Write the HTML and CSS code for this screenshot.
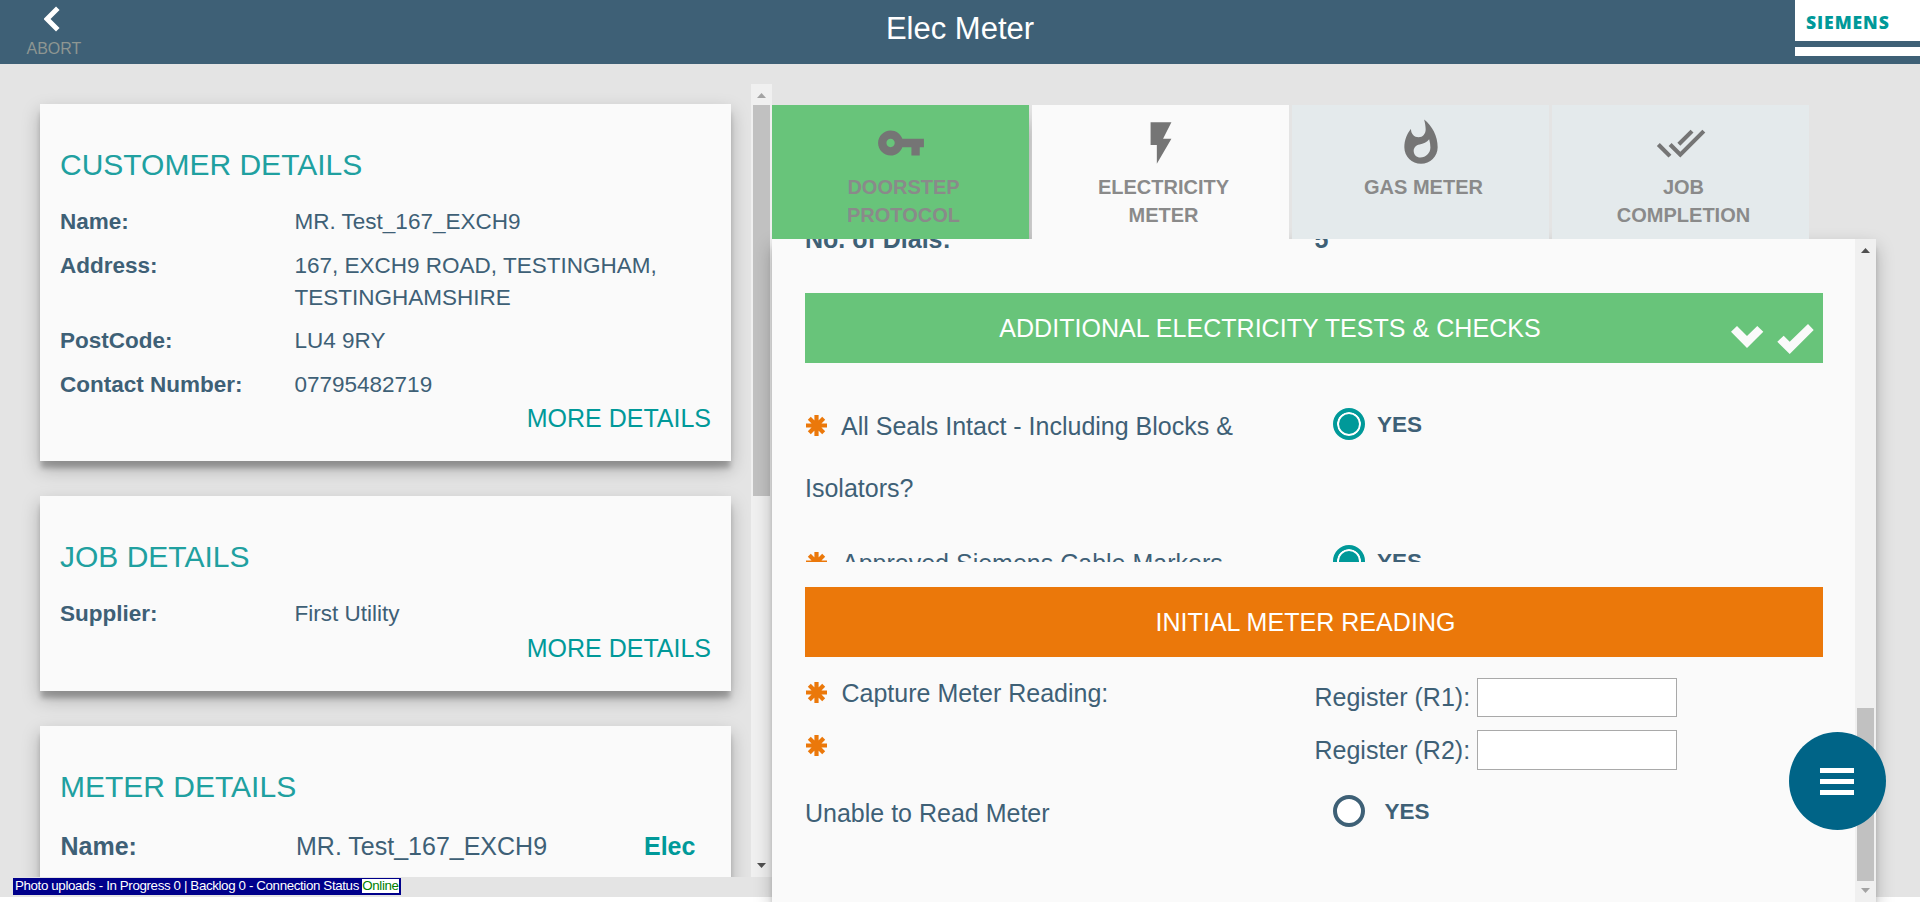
FILE: index.html
```html
<!DOCTYPE html>
<html lang="en">
<head>
<meta charset="utf-8">
<title>Elec Meter</title>
<link rel="stylesheet" href="styles.css">
</head>
<body>
<svg class="defs" width="0" height="0">
  <symbol id="star" viewBox="0 0 21 21">
    <path d="M10.5 0v21M0 10.5h21M3.300 3.300l14.400 14.400M17.700 3.300L3.300 17.700" fill="none" stroke="#eb780a" stroke-width="4.200"/>
  </symbol>
</svg>
<header class="topbar">
  <a class="abort">
    <svg class="abort-icon" viewBox="0 0 16 26"><path d="M13.800 2.200L3 13l10.800 10.800" fill="none" stroke="#fff" stroke-width="5"/></svg>
    <span>ABORT</span>
  </a>
  <h1 class="page-title">Elec Meter</h1>
  <div class="brand"><div class="brand-name"><span>SIEMENS</span></div><div class="brand-foot"></div></div>
</header>

<main class="workspace">
  <section class="sidebar">
    <div class="cards">
      <article class="card">
        <h2>CUSTOMER DETAILS</h2>
        <dl>
          <dt>Name:</dt><dd>MR. Test_167_EXCH9</dd>
          <dt>Address:</dt><dd>167, EXCH9 ROAD, TESTINGHAM, TESTINGHAMSHIRE</dd>
          <dt>PostCode:</dt><dd>LU4 9RY</dd>
          <dt>Contact Number:</dt><dd>07795482719</dd>
        </dl>
        <a class="more">MORE DETAILS</a>
      </article>
      <article class="card">
        <h2>JOB DETAILS</h2>
        <dl><dt>Supplier:</dt><dd>First Utility</dd></dl>
        <a class="more">MORE DETAILS</a>
      </article>
      <article class="card meter">
        <h2>METER DETAILS</h2>
        <div class="meter-row"><b>Name:</b><span>MR. Test_167_EXCH9</span><b class="fuel">Elec</b></div>
      </article>
    </div>
    <div class="scrollbar">
      <svg class="arrow faded" viewBox="0 0 9 5"><path d="M0 5L4.500 0 9 5z"/></svg>
      <div class="thumb side-thumb"></div>
      <svg class="arrow last" viewBox="0 0 9 5"><path d="M0 0h9L4.500 5z"/></svg>
    </div>
  </section>

  <section class="content">
    <nav class="tabs">
      <a class="tab done">
        <svg viewBox="0 0 24 24"><path d="M12.650 10C11.830 7.670 9.610 6 7 6c-3.310 0-6 2.690-6 6s2.690 6 6 6c2.610 0 4.830-1.670 5.650-4H17v4h4v-4h2v-4H12.650zM7 14c-1.100 0-2-.9-2-2s.9-2 2-2 2 .9 2 2-.9 2-2 2z"/></svg>
        <span>DOORSTEP<br>PROTOCOL</span>
      </a>
      <a class="tab active">
        <svg viewBox="0 0 24 24"><path d="M7 2v11h3v9l7-12h-4l4-8z"/></svg>
        <span>ELECTRICITY<br>METER</span>
      </a>
      <a class="tab">
        <svg viewBox="0 0 24 24"><path d="M13.500.67s.74 2.650.74 4.800c0 2.060-1.350 3.730-3.410 3.730-2.070 0-3.630-1.670-3.630-3.730l.03-.36C5.210 7.510 4 10.620 4 14c0 4.420 3.580 8 8 8s8-3.580 8-8C20 8.610 17.410 3.800 13.500.67zM11.710 19c-1.780 0-3.220-1.400-3.220-3.140 0-1.620 1.050-2.760 2.810-3.120 1.770-.36 3.600-1.210 4.620-2.580.39 1.290.59 2.650.59 4.040 0 2.650-2.150 4.800-4.800 4.800z"/></svg>
        <span>GAS METER</span>
      </a>
      <a class="tab">
        <svg viewBox="0 0 24 24"><path d="M18 7l-1.410-1.410-6.340 6.340 1.410 1.410L18 7zm4.240-1.410L11.660 16.170 7.480 12l-1.410 1.410L11.660 19l12-12-1.420-1.410zM.41 13.410L6 19l1.410-1.410L1.830 12 .41 13.410z"/></svg>
        <span>JOB<br>COMPLETION</span>
      </a>
    </nav>
    <div class="panel">
      <div class="form">
        <div class="dials"><b>No. of Dials:</b><b>5</b></div>
        <div class="bar bar-done">
          <span>ADDITIONAL ELECTRICITY TESTS &amp; CHECKS</span>
          <svg class="bar-icons" viewBox="0 0 84 31"><path d="M0 7.700L6 2 16 12 26.300 2 32.300 7.700 16 24zM46.300 17.700l6.400-6 6 6L77 0l5.700 6-24 24z" fill="#fafafa"/></svg>
        </div>
        <div class="checks">
          <div class="check">
            <div class="question"><svg class="star"><use href="#star"/></svg>All Seals Intact - Including Blocks &amp; Isolators?</div>
            <label class="choice"><i class="radio on"></i><span>YES</span></label>
          </div>
          <div class="check">
            <div class="question second"><svg class="star"><use href="#star"/></svg>Approved Siemens Cable Markers</div>
            <label class="choice"><i class="radio on"></i><span>YES</span></label>
          </div>
        </div>
        <div class="bar bar-todo"><span>INITIAL METER READING</span></div>
        <div class="reading first">
          <div class="caption"><svg class="star"><use href="#star"/></svg>Capture Meter Reading:</div>
          <label class="register">Register (R1):<input type="text"></label>
        </div>
        <div class="reading">
          <div class="caption"><svg class="star"><use href="#star"/></svg></div>
          <label class="register">Register (R2):<input type="text"></label>
        </div>
        <div class="unable">
          <div>Unable to Read Meter</div>
          <label class="choice wide"><i class="radio"></i><span>YES</span></label>
        </div>
      </div>
      <div class="scrollbar">
        <svg class="arrow" viewBox="0 0 9 5"><path d="M0 5L4.500 0 9 5z"/></svg>
        <div class="thumb panel-thumb"></div>
        <svg class="arrow last faded" viewBox="0 0 9 5"><path d="M0 0h9L4.500 5z"/></svg>
      </div>
    </div>
  </section>
</main>

<div class="status">Photo uploads - In Progress 0 | Backlog 0 - Connection Status <span>Online</span></div>
<button class="fab"><i></i><i></i><i></i></button>
</body>
</html>
```
FILE: styles.css
```css
* { box-sizing: border-box; }
body {
  margin: 0;
  height: 902px;
  overflow: hidden;
  position: relative;
  background: #fff;
  color: #3e6076;
  font-family: "Liberation Sans", Arial, sans-serif;
  font-size: 25px;
}
h1, h2, dl, dd { margin: 0; font-weight: 400; }
.defs { position: absolute; }

.topbar {
  height: 64px;
  background: #3e6076;
  display: grid;
  grid-template-columns: 125px 1fr 125px;
  align-items: start;
}
.abort {
  display: flex;
  flex-direction: column;
  width: 54px;
  margin-left: 26.500px;
  padding-top: 6px;
  color: #8e9692;
  font-size: 16px;
  line-height: 18px;
}
.abort-icon { width: 16px; height: 26px; margin: 0 0 8px 17.500px; }
.page-title { color: #fff; font-size: 31px; line-height: 36px; text-align: center; padding-top: 11px; }
.brand { height: 56px; display: flex; flex-direction: column; justify-content: space-between; }
.brand-name {
  height: 41px;
  padding: 7.500px 0 0 11px;
  background: #fff;
  color: #099;
  font: 800 17.600px/28px "Open Sans", sans-serif;
  letter-spacing: .9px;
}
.brand-foot { height: 9px; background: #fff; }

.workspace { height: 833px; background: #e4e4e4; display: flex; padding-top: 20px; }
.sidebar { width: 772px; height: 793px; display: flex; overflow: hidden; }
.cards { width: 751px; padding: 20px 20px 0 40px; display: flex; flex-direction: column; gap: 35px; }
.card {
  flex: none;
  background: #fafafa;
  padding: 44px 20px 29px;
  box-shadow: 0 8px 5px -1px rgba(0, 0, 0, .22), 0 8px 17px rgba(0, 0, 0, .25);
}
.card h2 { color: #20a0a0; font-size: 30px; line-height: 34px; padding-bottom: 24px; }
.card dl {
  display: grid;
  grid-template-columns: 234px 1fr;
  row-gap: 11.500px;
  font-size: 22.500px;
  line-height: 32px;
}
.card dt { font-weight: 700; }
.card dd { padding-left: .500px; }
.more { display: block; color: #099; line-height: 28px; margin-top: 3.500px; text-align: right; }
.card.meter { height: 300px; }
.meter-row { display: grid; grid-template-columns: 235.500px 348px auto; line-height: 30px; padding: 3px 0 0 .500px; }
.fuel { color: #099; }

.scrollbar { width: 21px; flex: none; background: #f0f0f0; display: flex; flex-direction: column; align-items: center; }
.arrow { width: 9px; height: 5px; margin-top: 9px; fill: #505050; flex: none; }
.arrow.faded { fill: #a3a3a3; }
.arrow.last { margin: auto 0 9px; }
.thumb { width: 17px; background: #c1c1c1; }
.side-thumb { height: 391px; margin-top: 7px; }
.panel-thumb { height: 173px; margin-top: 455px; }

.content { flex: none; width: 1104px; padding-top: 21px; }
.tabs { display: flex; gap: 3px; height: 134px; position: relative; z-index: 1; overflow: hidden; }
.tab {
  width: 257px;
  padding-top: 13px;
  background: #e4eaec;
  color: #8a8a8a;
  font-size: 20px;
  font-weight: 700;
  line-height: 28px;
  text-align: center;
}
.tab svg { display: block; width: 50px; height: 50px; margin: 0 auto 5px 104px; fill: #757575; }
.tab span { display: block; padding-left: 6px; }
.tab.done { background: #68c47a; box-shadow: 0 17px 17px rgba(0, 0, 0, .3); }
.tab.active { background: #fafafa; }
.panel {
  position: relative;
  height: 663px;
  display: flex;
  background: #fafafa;
  box-shadow: 0 8px 5px -1px rgba(0, 0, 0, .2), 0 8px 17px rgba(0, 0, 0, .25);
}
.form { width: 1083px; padding: 0 32px 0 33px; overflow: hidden; }
.dials { display: grid; grid-template-columns: 509.500px auto; margin-top: -14px; height: 68px; line-height: 28px; }
.bar { height: 70px; display: flex; align-items: center; color: #fff; line-height: 28px; letter-spacing: .040px; }
.bar span { flex: 1; text-align: center; }
.bar-done { background: #68c47a; }
.bar-done span { padding-left: 1px; }
.bar-icons { width: 84px; height: 31px; margin: 22px 8px 0 -3px; }
.bar-todo { background: #eb780a; padding-right: 17px; }

.star { width: 21px; height: 21px; margin: 0 14.500px 0 1px; vertical-align: -1px; flex: none; }
.checks { height: 199px; margin-bottom: 25px; padding-top: 32px; overflow: hidden; display: flex; flex-direction: column; gap: 13px; }
.check { flex: none; height: 124px; display: grid; grid-template-columns: 528px 1fr; }
.question { width: 470px; line-height: 62px; }
.question .star { margin-right: 14px; }
.question.second .star { margin-right: 15px; }
.choice { display: flex; align-items: center; align-self: start; gap: 12px; height: 32px; margin-top: 13px; font-size: 22.500px; font-weight: 700; }
.choice span { padding-top: 2px; }
.choice.wide { gap: 19.500px; margin-top: 0; }
.radio { width: 32px; height: 32px; border: 4px solid #3e6076; border-radius: 50%; background: #fff; }
.radio.on { border-color: #099; background: #099; box-shadow: inset 0 0 0 2px #fff; }

.reading { display: grid; grid-template-columns: 509.500px 1fr; margin-top: 13px; height: 40px; }
.reading.first { margin-top: 21px; height: 39px; }
.caption { display: flex; align-items: center; height: 28px; padding-top: 4px; }
.reading.first .caption { padding-top: 2px; }
.caption .star { margin-top: -2px; }
.register { display: flex; align-items: center; }
.register input { width: 200px; height: 100%; margin-left: auto; margin-right: 146px; border: 1px solid #a9a9a9; background: #fff; }
.unable { display: grid; grid-template-columns: 528px 1fr; margin-top: 25px; line-height: 36px; }

.status {
  position: absolute;
  left: 13px;
  top: 878px;
  width: 388px;
  height: 17px;
  padding-left: 2px;
  background: #00008b;
  color: #fff;
  font-size: 13.330px;
  line-height: 15px;
  letter-spacing: -.37px;
  white-space: nowrap;
}
.status span { display: inline-block; height: 14px; margin-top: 1px; line-height: 13px; background: #fff; color: #008000; }
.fab {
  position: absolute;
  left: 1788.500px;
  top: 732px;
  width: 97px;
  height: 98px;
  padding: 0 1px 0 0;
  border: 0;
  border-radius: 50%;
  background: #006487;
  display: flex;
  flex-direction: column;
  align-items: center;
  justify-content: center;
  gap: 6px;
}
.fab i { width: 34px; height: 5px; background: #fff; }
```
